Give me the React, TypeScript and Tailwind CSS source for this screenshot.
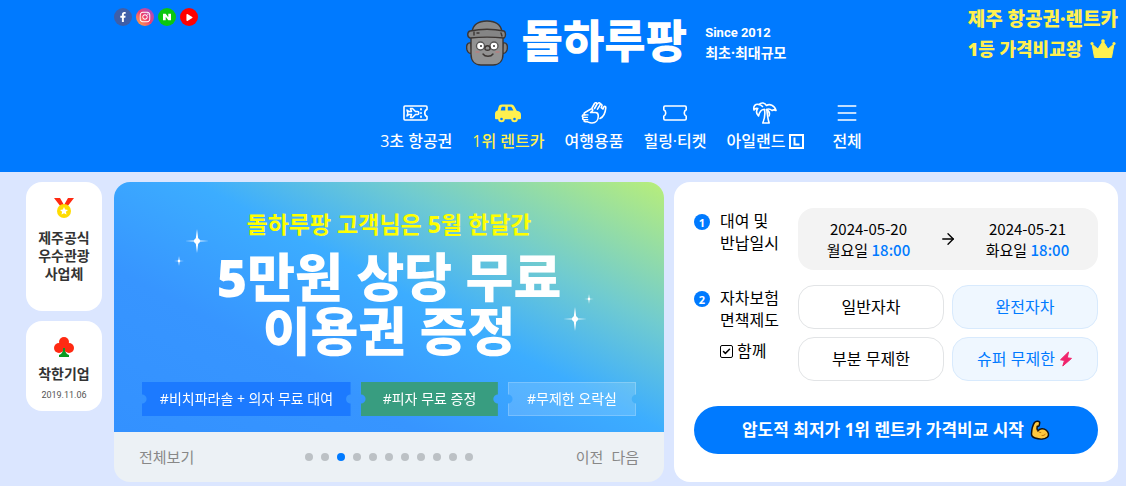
import type { ReactNode } from "react";
import { FaFacebookF, FaInstagram, FaPlay } from "react-icons/fa";
import { ArrowRight, Check } from "lucide-react";
import clsx from "clsx";

function LogoFace() {
  return (
    <svg viewBox="0 0 42 46" className="h-[46px] w-[42px] shrink-0" stroke="#3b3634" strokeWidth="1.4" strokeLinejoin="round" strokeLinecap="round">
      <path d="M5 23c-4-1-5 3-4 7 1 3 3 4 5 3z" fill="#858585" />
      <path d="M37 23c4-1 5 3 4 7-1 3-3 4-5 3z" fill="#858585" />
      <path d="M5 15h32v19c0 7-4 11-10 11H15C9 45 5 41 5 34z" fill="#929292" />
      <path d="M6 12C7 5 12 1 21 1s14 4 15 11z" fill="#8b8b8b" />
      <path d="M4 11c10-2 24-2 34 0 2 1 2 6 0 7-10-1-24-1-34 0-3-1-3-6 0-7z" fill="#858585" />
      <path d="M8 12v3M11 13h2M35 13l1 3" fill="none" />
      <circle cx="14.500" cy="26" r="4" fill="#fff" stroke="#555" />
      <circle cx="28" cy="26" r="4" fill="#fff" stroke="#555" />
      <circle cx="15" cy="26" r="1" fill="#333" stroke="none" />
      <circle cx="28" cy="26" r="1" fill="#333" stroke="none" />
      <path d="M19 28c0-3 5-3 5 0 1 3-6 3-5 0z" fill="#929292" />
      <path d="M17 34c2 3 8 3 10 0" fill="none" />
      <path d="M10 32h3M30 32h3" stroke="#b77f7f" />
    </svg>
  );
}

function Crown() {
  return (
    <svg viewBox="0 0 26 20" className="h-5 w-[26px]" fill="#fff04f">
      <path d="M2 5l6 5 5-8 5 8 6-5-2.500 13.500h-17z" stroke="#fff04f" strokeLinejoin="round" />
      <circle cx="2" cy="4.500" r="1.600" />
      <circle cx="13" cy="2" r="1.800" />
      <circle cx="24" cy="4.500" r="1.600" />
    </svg>
  );
}

function NavIcon({ children }: { children: ReactNode }) {
  return (
    <svg viewBox="0 0 28 24" className="h-6 w-7" fill="none" stroke="currentColor" strokeWidth="1.600" strokeLinejoin="round" strokeLinecap="round">
      {children}
    </svg>
  );
}

const ticketIcon = (
  <NavIcon>
    <path d="M4 5h20c.8 0 1.200.4 1.200 1.200v2.600c-2.600 1.200-2.600 5.200 0 6.400v2.600c0 .8-.4 1.200-1.200 1.200H4c-.8 0-1.200-.4-1.200-1.200v-2.600c2.600-1.200 2.600-5.200 0-6.400V6.200C2.800 5.400 3.200 5 4 5z" />
  </NavIcon>
);

const airIcon = (
  <NavIcon>
    <path d="M3 5h21c.8 0 1 .4 1 1v2.500c-3 1-3 6 0 7V18c0 .8-.3 1-1 1H3c-.8 0-1-.4-1-1V6c0-.7.300-1 1-1z" />
    <path d="M5 9l2 1.500h2.500L8.500 7.500h2l3 3h2c1.800 0 1.800 3 0 3h-2l-3 3h-2l1-3H7L5 15l.8-3z" strokeWidth="1.500" />
    <path d="M19 8v.5M19 11.800v.4M19 15.500v.5" strokeWidth="1.800" />
  </NavIcon>
);

const carIcon = (
  <NavIcon>
    <path
      fill="currentColor"
      fillRule="evenodd"
      stroke="none"
      d="M8 3.500h9c1.600 0 2.600.6 3.400 2l2.300 4.200c3 .4 4.300 1.700 4.300 4.300v3c0 .8-.5 1.300-1.300 1.300H2.300c-.8 0-1.300-.5-1.300-1.300v-4c0-2 .8-3.200 2.600-3.600l1-3.400c.5-1.700 1.400-2.500 3.400-2.500zM8.600 5.800c-.7 0-1 .3-1.200 1l-.7 2.600h4.600V5.800zm5.200 0v3.600h5.600l-1.500-2.600c-.4-.7-.8-1-1.600-1z"
    />
    <circle cx="7.500" cy="18" r="3.300" fill="currentColor" stroke="none" />
    <circle cx="20.500" cy="18" r="3.300" fill="currentColor" stroke="none" />
    <circle cx="7.500" cy="18" r="1.300" fill="#007aff" stroke="none" />
    <circle cx="20.500" cy="18" r="1.300" fill="#007aff" stroke="none" />
  </NavIcon>
);

const clapIcon = (
  <NavIcon>
    <path d="M5 11.500l5.500-3.300c1.800-1 3 .8 1.700 1.900L10.500 11.500h5c1.500 0 2.800 1.500 2.800 3.500 0 4-2.500 7-6.300 7-2.500 0-3.700-1-4.500-1.200H5.200c-1.600 0-1.600-2 0-2.100H4c-1.800 0-1.800-2.300 0-2.400h-.5c-1.600 0-1.600-2.300.2-2.400H5c-1.300-.4-1.200-1.800 0-2.400z" />
    <path d="M4.500 16.300h3M5.200 18.700h2.600M5 13.900h3" strokeWidth="1.200" />
    <path d="M12 7l2.500-4.500c1-1.500 2.800-.6 2.300 1L18 2.300c1.200-1.300 2.800-.1 2 1.300 1.300-1 2.600.2 1.800 1.600l-.6 1.500 1.800 1.300.8-2c.8-1.200 2.200-.5 2 .8-.5 5-2 9-5.800 10.700M16.500 4l-2 3.500M20 4.200l-2.500 4" />
  </NavIcon>
);

const palmIcon = (
  <NavIcon>
    <path d="M13.500 8.500C10 8 8.500 11 7.500 15c-2-2-2.500-5-.8-7.500-1.500-.4-2.700 0-3.700 1.500-1-4 1.500-6.500 5-5.500C10.500.8 14 2 15.500 4.500c3-2 8-.5 9.500 5-1.500-.8-2.700-.8-4 0-1.700-1.500-4-1.700-5.500-1 2.500 1.500 3.500 4 2.500 6.500" />
    <path d="M13.500 8.500c.7 4 .2 9-1.700 13.500h6.400c-1.500-4-1.700-8.500-2.400-13.500M8 3.500c1.500.3 2.500 1 3.500 2" />
  </NavIcon>
);

const menuIcon = (
  <NavIcon>
    <path d="M5.500 5h17M5.500 12h17M5.500 19h17" strokeLinecap="square" />
  </NavIcon>
);

const nav = [
  { label: "3초 항공권", icon: airIcon },
  { label: "1위 렌트카", icon: carIcon, active: true },
  { label: "여행용품", icon: clapIcon },
  { label: "힐링·티켓", icon: ticketIcon },
  { label: "아일랜드", icon: palmIcon, badge: true },
  { label: "전체", icon: menuIcon, last: true },
];

function Header() {
  return (
    <header className="bg-[#007aff] pt-2 pr-2 pb-[19px] pl-[114px] text-white">
      <div className="grid grid-cols-[1fr_auto_1fr] items-start whitespace-nowrap">
        <div className="flex gap-1">
          <a href="#" aria-label="Facebook" className="flex size-[18px] items-end justify-center rounded-full bg-[#3f5fa8]">
            <FaFacebookF className="mb-1 size-[10px]" />
          </a>
          <a href="#" aria-label="Instagram" className="flex size-[18px] items-center justify-center rounded-full bg-linear-to-tr from-[#ffb32c] via-[#f0396b] to-[#8a3be0]">
            <FaInstagram className="size-3" />
          </a>
          <a href="#" aria-label="Naver" className="flex size-[18px] items-center justify-center rounded-full bg-[#0bc70f]">
            <svg viewBox="0 0 10 10" className="size-2" fill="#fff">
              <path d="M0 1h3.400l3.200 4.400V1H10v8H6.600L3.400 4.600V9H0z" />
            </svg>
          </a>
          <a href="#" aria-label="YouTube" className="flex size-[18px] items-center justify-center rounded-full bg-[#ff0000]">
            <FaPlay className="size-[7px]" />
          </a>
        </div>

        <a href="#" className="flex items-start pt-3 pl-5">
          <LogoFace />
          <span className="ml-[14px] text-[45px] leading-[42px] font-black">돌하루팡</span>
          <span className="ml-[18px] pt-[3px] text-sm leading-5 font-bold">
            <span className="block font-[Roboto] text-[13px] leading-5">Since 2012</span>
            <span className="block">최초·최대규모</span>
          </span>
        </a>

        <div className="justify-self-end text-[19px] leading-[30px] font-black text-[#fff04f]">
          <div className="-mt-1">제주 항공권·렌트카</div>
          <div className="flex items-center gap-2 text-lg leading-[30px]">
            1등 가격비교왕
            <Crown />
          </div>
        </div>
      </div>

      <nav className="mt-[35px] flex justify-center gap-5 pl-[10px]">
        {nav.map(({ label, icon, active, badge, last }) => (
          <a
            key={label}
            href="#"
            className={clsx(
              "flex flex-col items-center gap-1 text-base leading-6 font-medium whitespace-nowrap",
              active && "text-[#fff04f]",
              last && "ml-2"
            )}
          >
            {icon}
            <span className="flex items-center gap-1">
              {label}
              {badge && (
                <svg viewBox="0 0 15 15" className="size-[15px]" fill="none" stroke="currentColor" strokeWidth="2">
                  <rect x="1" y="1" width="13" height="13" />
                  <path d="M5.500 3.500v7h5" />
                </svg>
              )}
            </span>
          </a>
        ))}
      </nav>
    </header>
  );
}

function Awards() {
  return (
    <aside className="flex flex-col gap-[10px] text-center text-sm leading-[18px] font-bold whitespace-nowrap text-[#333]">
      <div className="flex flex-col items-center rounded-2xl bg-white pt-[14px] pb-7">
        <svg viewBox="0 0 24 24" className="size-6">
          <path d="M2 2h6l4 7-3 2zM22 2h-6l-4 7 3 2z" fill="#ff2a12" />
          <circle cx="12" cy="15" r="7" fill="#ffdc00" />
          <path d="M12 11l1.200 2.600 2.800.3-2.100 1.900.6 2.800-2.500-1.400-2.500 1.400.6-2.800L8 13.900l2.800-.3z" fill="#fff" />
        </svg>
        <p className="mt-[9px]">
          제주공식
          <br />
          우수관광
          <br />
          사업체
        </p>
      </div>
      <div className="flex flex-col items-center rounded-2xl bg-white pt-[14px] pb-2">
        <svg viewBox="0 0 24 24" className="size-6">
          <path d="M11 12h2c0 5 1 7 4 8v2H7v-2c3-1 4-3 4-8z" fill="#0a9a22" />
          <circle cx="12" cy="7" r="5" fill="#ff2a12" />
          <circle cx="7" cy="13" r="5" fill="#ff2a12" />
          <circle cx="17" cy="13" r="5" fill="#ff2a12" />
          <path d="M10 8h4v6h-4z" fill="#ff2a12" />
          <path d="M11 13h2v7h-2z" fill="#0a9a22" />
        </svg>
        <p className="mt-[6px]">착한기업</p>
        <p className="mt-1 font-[Roboto] text-[9px] leading-4 font-normal text-[#555]">2019.11.06</p>
      </div>
    </aside>
  );
}

function Sparkle({ className }: { className: string }) {
  return (
    <svg viewBox="0 0 24 24" className={clsx("absolute", className)} fill="#fff">
      <path d="M12 0l1.200 9.500L15 11.400l9 .6-9 .6-1.800 1.900L12 24l-1.200-9.500L9 12.600 0 12l9-.6 1.800-1.900z" />
      <circle cx="12" cy="12" r="2.800" />
    </svg>
  );
}

const ticketMask =
  "[mask:radial-gradient(circle_at_0_50%,transparent_4px,black_5px)_left/51%_100%_no-repeat,radial-gradient(circle_at_100%_50%,transparent_4px,black_5px)_right/51%_100%_no-repeat]";

const coupons = [
  { text: "#비치파라솔 + 의자 무료 대여", className: "w-[209px] bg-[#1c7aff]" },
  { text: "#피자 무료 증정", className: "w-[137px] bg-[#389d80]" },
  { text: "#무제한 오락실", className: "w-32 border border-white/20 bg-white/15" },
];

function Banner() {
  return (
    <section className="flex flex-col overflow-hidden rounded-2xl bg-[#ecf1f5]">
      <div className="relative bg-[linear-gradient(28deg,#3391ff_0%,#3795ff_30%,#3cadff_54%,#70cbd0_73%,#b8ee7a_100%)] px-7 pt-7 pb-4 text-center whitespace-nowrap">
        <Sparkle className="top-[47px] left-[71px] size-6" />
        <Sparkle className="top-[74px] left-[60px] size-[10px]" />
        <Sparkle className="top-[125px] right-[77px] size-6" />
        <Sparkle className="top-[112px] right-[70px] size-[10px]" />
        <p className="text-[23px] leading-7 font-bold text-[#ffff00]">돌하루팡 고객님은 5월 한달간</p>
        <h1 className="mt-3 text-[52px] leading-[54px] font-black text-white">
          <span className="block">5만원 상당 무료</span>
          <span className="block">이용권 증정</span>
        </h1>
        <ul className="mt-6 flex justify-center gap-[10px] text-sm text-white">
          {coupons.map((c) => (
            <li key={c.text} className={clsx("flex h-[34px] items-center justify-center", ticketMask, c.className)}>
              {c.text}
            </li>
          ))}
        </ul>
      </div>

      <div className="grid flex-1 grid-cols-[1fr_auto_1fr] items-center px-[25px] text-[15px] leading-6 text-[#888]">
        <a href="#" className="justify-self-start">전체보기</a>
        <div className="flex gap-2">
          {Array.from({ length: 11 }, (_, i) => (
            <button
              key={i}
              type="button"
              aria-label={`${i + 1}`}
              className={clsx("size-2 rounded-full", i === 2 ? "bg-[#007aff]" : "bg-[#bcc1c5]")}
            />
          ))}
        </div>
        <div className="flex gap-2 justify-self-end">
          <button type="button">이전</button>
          <button type="button">다음</button>
        </div>
      </div>
    </section>
  );
}

function StepNumber({ n }: { n: number }) {
  return (
    <span className="mt-[6px] flex size-4 shrink-0 items-center justify-center rounded-full bg-[#007aff] text-[11px] leading-none font-bold text-white">
      {n}
    </span>
  );
}

function DateButton({ date, day, time }: { date: string; day: string; time: string }) {
  return (
    <button type="button" className="text-center font-['Noto_Sans_CJK_KR',sans-serif]">
      <span className="block">{date}</span>
      <span className="block">
        {day} <span className="font-medium text-[#007aff]">{time}</span>
      </span>
    </button>
  );
}

function Bicep() {
  return (
    <svg viewBox="0 0 20 20" className="size-5" fill="#ffc83d" stroke="#111" strokeWidth="1.500" strokeLinejoin="round" strokeLinecap="round">
      <path d="M4.500 2.500C6 1 8.500.8 9.500 2c.7 1-.2 2-.2 3S8.500 6.500 7.200 6.300c-.5 1.700-.2 3.200.6 4.700 2-2.800 6-3 8.500-.8 2.300 2 3 5 1.200 6.800-2.500 2.300-8 2.500-12.500 1-2.500-.8-3.700-2-3.500-4.500C1.700 9.800 2.500 5.500 4.500 2.500z" />
      <path d="M8 11c.7 1.200 1.600 1.700 2.800 1.500M12 15.500c1.500.2 2.800-.3 3.500-1.500" fill="none" stroke="#c47a10" strokeWidth="1" />
    </svg>
  );
}

const plain = "border-[#e2e4e6] bg-white";
const blue = "border-[#d8eafd] bg-[#eff7ff] text-[#007aff]";

function SearchPanel() {
  return (
    <form className="rounded-2xl bg-white px-5 pt-[26px] pb-7 text-base leading-[22px] whitespace-nowrap text-black">
      <div className="grid grid-cols-[94px_1fr] gap-x-[10px] gap-y-[15px]">
        <div className="flex gap-[10px]">
          <StepNumber n={1} />
          <p className="pt-[2px]">
            대여 및
            <br />
            반납일시
          </p>
        </div>
        <div className="grid grid-cols-[1fr_auto_1fr] items-center rounded-2xl bg-[#f3f3f3] py-[10px] text-[15px] leading-[21px]">
          <DateButton date="2024-05-20" day="월요일" time="18:00" />
          <ArrowRight className="size-[18px]" strokeWidth={1.8} />
          <DateButton date="2024-05-21" day="화요일" time="18:00" />
        </div>

        <div className="flex gap-[10px]">
          <StepNumber n={2} />
          <div className="pt-[2px]">
            <p>
              자차보험
              <br />
              면책제도
            </p>
            <label className="mt-[9px] flex items-center gap-1">
              <span className="relative flex size-[13px]">
                <input type="checkbox" defaultChecked className="size-[13px] appearance-none rounded-[2px] border-[1.5px] border-black" />
                <Check className="pointer-events-none absolute top-[2px] left-[2px] size-[9px]" strokeWidth={4} />
              </span>
              함께
            </label>
          </div>
        </div>
        <div className="grid grid-cols-2 gap-2">
          <button type="button" className={clsx("h-11 rounded-2xl border", plain)}>일반자차</button>
          <button type="button" className={clsx("h-11 rounded-2xl border", blue)}>완전자차</button>
          <button type="button" className={clsx("h-11 rounded-2xl border", plain)}>부분 무제한</button>
          <button type="button" className={clsx("flex h-11 items-center justify-center gap-1 rounded-2xl border", blue)}>
            슈퍼 무제한
            <svg viewBox="0 0 14 16" className="h-4 w-[14px]" fill="#f0246c" stroke="#f0246c" strokeLinejoin="round">
              <path d="M9.500 1L1.500 8.800l4 .6-1.700 5.600 8.700-7.600-4.200-.6z" />
            </svg>
          </button>
        </div>
      </div>
      <button
        type="button"
        className="mt-[25px] flex h-12 w-full items-center justify-center gap-[6px] rounded-full bg-[#007aff] text-[17px] font-bold text-white"
      >
        압도적 최저가 1위 렌트카 가격비교 시작
        <Bicep />
      </button>
    </form>
  );
}

export default function App() {
  return (
    <div className="min-h-screen bg-[#dbe6ff] font-['Open_Sans','Noto_Sans_CJK_KR',sans-serif]">
      <Header />
      <main className="grid grid-cols-[76px_1fr_444px] pt-[10px] pr-2 pb-1 pl-[26px]">
        <Awards />
        <div className="mr-[10px] ml-3 grid">
          <Banner />
        </div>
        <SearchPanel />
      </main>
    </div>
  );
}
